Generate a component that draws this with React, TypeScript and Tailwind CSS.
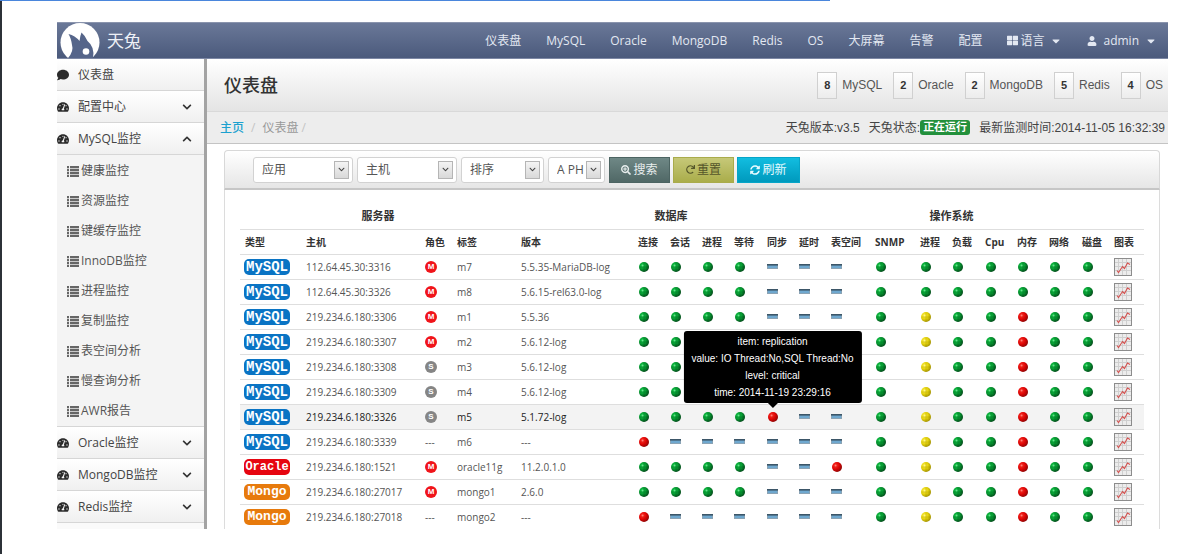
import { useState } from 'react';
import {
  FaCaretDown,
  FaChevronDown,
  FaChevronUp,
  FaComment,
  FaRedo,
  FaSearchPlus,
  FaSyncAlt,
  FaTachometerAlt,
  FaThLarge,
  FaUser,
} from 'react-icons/fa';

type Lamp = 'g' | 'r' | 'y' | '-';

interface Server {
  type: 'MySQL' | 'Oracle' | 'Mongo';
  host: string;
  role: 'M' | 'S' | '---';
  tag: string;
  version: string;
  db: string;
  os: string;
}

// db: 连接 会话 进程 等待 同步 延时 表空间, os: SNMP 进程 负载 Cpu 内存 网络 磁盘
const servers: Server[] = [
  { type: 'MySQL', host: '112.64.45.30:3316', role: 'M', tag: 'm7', version: '5.5.35-MariaDB-log', db: 'gggg---', os: 'ggggggg' },
  { type: 'MySQL', host: '112.64.45.30:3326', role: 'M', tag: 'm8', version: '5.6.15-rel63.0-log', db: 'gggg---', os: 'ggggggg' },
  { type: 'MySQL', host: '219.234.6.180:3306', role: 'M', tag: 'm1', version: '5.5.36', db: 'gggg---', os: 'gyggrgg' },
  { type: 'MySQL', host: '219.234.6.180:3307', role: 'M', tag: 'm2', version: '5.6.12-log', db: 'gggg---', os: 'gyggrgg' },
  { type: 'MySQL', host: '219.234.6.180:3308', role: 'S', tag: 'm3', version: '5.6.12-log', db: 'gggg---', os: 'gyggrgg' },
  { type: 'MySQL', host: '219.234.6.180:3309', role: 'S', tag: 'm4', version: '5.6.12-log', db: 'gggg---', os: 'gyggrgg' },
  { type: 'MySQL', host: '219.234.6.180:3326', role: 'S', tag: 'm5', version: '5.1.72-log', db: 'ggggr--', os: 'gyggrgg' },
  { type: 'MySQL', host: '219.234.6.180:3339', role: '---', tag: 'm6', version: '---', db: 'r------', os: 'gyggrgg' },
  { type: 'Oracle', host: '219.234.6.180:1521', role: 'M', tag: 'oracle11g', version: '11.2.0.1.0', db: 'gggg--r', os: 'gyggrgg' },
  { type: 'Mongo', host: '219.234.6.180:27017', role: 'M', tag: 'mongo1', version: '2.6.0', db: 'gggg---', os: 'gyggrgg' },
  { type: 'Mongo', host: '219.234.6.180:27018', role: '---', tag: 'mongo2', version: '---', db: 'r------', os: 'gyggrgg' },
];

const columns = [
  { name: '类型', width: 'w-[61px]' },
  { name: '主机', width: 'w-[119px]' },
  { name: '角色', width: 'w-[32px]' },
  { name: '标签', width: 'w-[64px]' },
  { name: '版本', width: 'w-[117px]' },
  { name: '连接', width: 'w-[32px]' },
  { name: '会话', width: 'w-[32px]' },
  { name: '进程', width: 'w-[32px]' },
  { name: '等待', width: 'w-[33px]' },
  { name: '同步', width: 'w-[32px]' },
  { name: '延时', width: 'w-[32px]' },
  { name: '表空间', width: 'w-[44px]' },
  { name: 'SNMP', width: 'w-[45px]' },
  { name: '进程', width: 'w-[32px]' },
  { name: '负载', width: 'w-[33px]' },
  { name: 'Cpu', width: 'w-[32px]' },
  { name: '内存', width: 'w-[32px]' },
  { name: '网络', width: 'w-[33px]' },
  { name: '磁盘', width: 'w-[32px]' },
  { name: '图表', width: 'w-[35px]' },
];

const navItems = ['仪表盘', 'MySQL', 'Oracle', 'MongoDB', 'Redis', 'OS', '大屏幕', '告警', '配置'];

const mysqlMenu = ['健康监控', '资源监控', '键缓存监控', 'InnoDB监控', '进程监控', '复制监控', '表空间分析', '慢查询分析', 'AWR报告'];

const counters = [
  { count: 8, name: 'MySQL' },
  { count: 2, name: 'Oracle' },
  { count: 2, name: 'MongoDB' },
  { count: 5, name: 'Redis' },
  { count: 4, name: 'OS' },
];

const filters = [
  { label: '应用', width: 'w-[100px]' },
  { label: '主机', width: 'w-[100px]' },
  { label: '排序', width: 'w-[83px]' },
  { label: 'A PH', width: 'w-[57px]' },
];

const badgeColors = {
  MySQL: 'bg-[#0a74c4] text-[14px]',
  Oracle: 'bg-[#e60510] text-[12px]',
  Mongo: 'bg-[#e77a0c] text-[13px]',
};

function Logo() {
  return (
    <svg viewBox="0 0 40 35" className="h-[35px] w-10" aria-hidden="true">
      <circle cx="20" cy="19.5" r="19.5" fill="#fff" />
      <path
        d="M8.5 11 Q15 12.5 19.5 18 Q20 13 21.5 9.5 Q25.5 13 27.5 18 Q35 24 33 35 L8 35 Q14 28 12 22 Q11 15 8.5 11 Z"
        fill="#55658a"
      />
      <circle cx="26" cy="28.5" r="3.3" fill="#fff" />
    </svg>
  );
}

function ListIcon() {
  return (
    <svg viewBox="0 0 12 11" className="h-[11px] w-3 text-[#666]" fill="currentColor" aria-hidden="true">
      {[0, 3, 6, 9].map(y => (
        <g key={y}>
          <rect x="0" y={y} width="2" height="2.3" />
          <rect x="3" y={y} width="9" height="2.3" />
        </g>
      ))}
    </svg>
  );
}

function StatusLamp({ value }: { value: Lamp }) {
  if (value === '-') {
    return (
      <svg viewBox="0 0 11 5" className="h-[5px] w-[11px]" aria-label="无数据">
        <rect x="0.5" y="0.5" width="10" height="4" fill="#6fa8cf" stroke="#8aa3b5" />
        <rect x="0" y="0" width="11" height="1.6" fill="#3c5668" />
      </svg>
    );
  }
  return (
    <svg viewBox="0 0 10 10" className="size-[10px]" aria-label="状态">
      <circle cx="5" cy="5" r="5" fill={`url(#lamp-${value})`} />
      <path d="M5 0.5V9.5M0.5 5H9.5" stroke={value === 'y' ? '#7d7400' : '#003010'} strokeWidth="0.6" opacity={value === 'r' ? 0.1 : 0.4} />
      <circle cx="3.6" cy="3.4" r="1" fill="#fff" opacity="0.35" />
    </svg>
  );
}

function LampGradients() {
  const lamps = [
    { id: 'lamp-g', light: '#14d24c', mid: '#069a32', dark: '#04491a' },
    { id: 'lamp-r', light: '#ff3a2e', mid: '#e60505', dark: '#8a0505' },
    { id: 'lamp-y', light: '#fff04a', mid: '#e6d40c', dark: '#a39205' },
  ];
  return (
    <svg className="absolute size-0" aria-hidden="true">
      <defs>
        {lamps.map(l => (
          <radialGradient key={l.id} id={l.id} cx="0.35" cy="0.35" r="0.7">
            <stop offset="0" stopColor={l.light} />
            <stop offset="0.5" stopColor={l.mid} />
            <stop offset="1" stopColor={l.dark} />
          </radialGradient>
        ))}
      </defs>
    </svg>
  );
}

function ChartIcon() {
  return (
    <svg viewBox="0 0 18 18" className="size-[18px]" aria-hidden="true">
      <rect x="0.5" y="0.5" width="17" height="17" fill="#ececec" stroke="#8c8c8c" />
      <path d="M4.5 1V17M8.5 1V17M12.5 1V17M1 4.5H17M1 8.5H17M1 12.5H17" stroke="#cfcfcf" />
      <path d="M3 12.5L4.5 14.5L8.5 8.5L10.5 10.5L13.5 5L16 6.5" fill="none" stroke="#d4514f" strokeWidth="1.1" />
    </svg>
  );
}

function Role({ role }: { role: Server['role'] }) {
  if (role === '---') return <>---</>;
  return (
    <span
      className={`flex size-3 items-center justify-center rounded-full font-['Liberation_Sans',sans-serif] text-[8px] leading-none font-bold text-white ${
        role === 'M' ? 'bg-[#f0141a]' : 'bg-[#858585]'
      }`}
    >
      {role}
    </span>
  );
}

function Tooltip() {
  return (
    <div
      role="tooltip"
      className="absolute bottom-full left-1/2 z-10 mb-[9px] -translate-x-1/2 rounded-[3px] bg-black px-2 py-[2px] text-center font-['Liberation_Sans',sans-serif] text-[10px] leading-[17px] font-normal whitespace-nowrap text-white"
    >
      <div>item: replication</div>
      <div>value: IO Thread:No,SQL Thread:No</div>
      <div>level: critical</div>
      <div>time: 2014-11-19 23:29:16</div>
      <div className="absolute top-full left-1/2 -translate-x-1/2 border-x-[5px] border-t-[5px] border-x-transparent border-t-black" />
    </div>
  );
}

function MenuButton({ label, open, onClick }: { label: string; open?: boolean; onClick?: () => void }) {
  return (
    <button
      type="button"
      onClick={onClick}
      aria-expanded={!!open}
      className="flex h-8 w-full items-center border-b border-[#d6d6d6] bg-linear-to-b from-white to-[#f0f0f0] pr-3 text-left text-[#444]"
    >
      <FaTachometerAlt size={12} className="text-[#2b2b2b]" />
      <span className="ml-[9px] flex-1">{label}</span>
      {open ? <FaChevronUp size={10} className="text-[#333]" /> : <FaChevronDown size={10} className="text-[#333]" />}
    </button>
  );
}

function Sidebar() {
  const [open, setOpen] = useState(true);

  return (
    <aside className="w-[150px] shrink-0 border-r-[3px] border-[#a3a3a3] bg-[#fafafa]">
      <a href="#dashboard" className="flex h-8 items-center border-b border-[#d6d6d6] bg-linear-to-b from-white to-[#f0f0f0] text-[#444]">
        <FaComment size={12} className="text-[#2b2b2b]" />
        <span className="ml-[9px]">仪表盘</span>
      </a>
      <MenuButton label="配置中心" />
      <MenuButton label="MySQL监控" open={open} onClick={() => setOpen(!open)} />
      {open && (
        <ul className="border-b border-[#d6d6d6] bg-[#f4f4f4] pt-px">
          {mysqlMenu.map(item => (
            <li key={item}>
              <a href={`#${item}`} className="flex h-[30px] items-center gap-[2px] pl-[10px] text-[#555]">
                <ListIcon />
                {item}
              </a>
            </li>
          ))}
        </ul>
      )}
      <MenuButton label="Oracle监控" />
      <MenuButton label="MongoDB监控" />
      <MenuButton label="Redis监控" />
    </aside>
  );
}

function FilterBar() {
  return (
    <form
      onSubmit={e => e.preventDefault()}
      className="flex h-10 items-center gap-1 rounded-t-[4px] border border-b-2 border-[#d8d8d8] border-b-[#c6c6c6] bg-linear-to-b from-white to-[#e6e6e6] pl-7"
    >
      {filters.map(f => (
        <div key={f.label} className={`relative ${f.width}`}>
          <select
            aria-label={f.label}
            className="block h-[26px] w-full appearance-none rounded-[3px] border border-[#d2d2d2] bg-white pl-2 text-[12px] text-[#555]"
          >
            <option>{f.label}</option>
          </select>
          <span className="pointer-events-none absolute top-1 right-1 flex h-[18px] w-[15px] items-center justify-center border border-[#b5b5b5] bg-linear-to-b from-[#f4f4f4] to-[#d9d9d9]">
            <FaChevronDown size={7} className="text-[#444]" />
          </span>
        </div>
      ))}
      <div className="flex gap-[3px]">
        <button type="submit" className="flex h-[26px] w-[61px] items-center justify-center gap-[2px] border border-[#4c6462] bg-linear-to-b from-[#6f8886] to-[#506866] text-[#e8eeee]">
          <FaSearchPlus size={10} />
          搜索
        </button>
        <button type="reset" className="flex h-[26px] w-[61px] items-center justify-center gap-[2px] border border-[#a9ab4b] bg-linear-to-b from-[#c6c878] to-[#aaad4a] text-[#55562a]">
          <FaRedo size={9} />
          重置
        </button>
        <button type="button" className="flex h-[26px] w-[63px] items-center justify-center gap-[2px] border border-[#06a5c8] bg-linear-to-b from-[#12bde0] to-[#0099bd] text-[#e6fbff]">
          <FaSyncAlt size={10} />
          刷新
        </button>
      </div>
    </form>
  );
}

function ServerTable() {
  return (
    <table className="w-full table-fixed border-collapse text-[10px] text-[#555]">
      <colgroup>
        {columns.map((c, i) => (
          <col key={i} className={c.width} />
        ))}
      </colgroup>
      <thead className="text-[#333]">
        <tr className="h-[25px] text-[11px]">
          <th colSpan={4}>服务器</th>
          <th colSpan={7}>数据库</th>
          <th colSpan={7}>操作系统</th>
          <th colSpan={2} />
        </tr>
        <tr className="h-[25px] border-t border-[#dedede]">
          {columns.map((c, i) => (
            <th key={i} className="p-0 pl-[5px] text-left whitespace-nowrap">
              {c.name}
            </th>
          ))}
        </tr>
      </thead>
      <tbody>
        {servers.map(s => {
          const active = s.tag === 'm5';
          return (
            <tr
              key={s.tag}
              className={`h-[25px] border-t border-[#dedede] whitespace-nowrap ${active ? 'bg-[#f3f3f3] text-[#222]' : ''}`}
            >
              <td className="p-0 pl-1">
                <span
                  className={`flex h-4 w-[46px] items-center justify-center rounded-[5px] font-['Liberation_Mono',monospace] leading-none font-bold text-white ${badgeColors[s.type]}`}
                >
                  {s.type}
                </span>
              </td>
              <td className="p-0 pl-[5px]">{s.host}</td>
              <td className="p-0 pl-[5px]">
                <Role role={s.role} />
              </td>
              <td className="p-0 pl-[5px]">{s.tag}</td>
              <td className="p-0 pl-[5px]">{s.version}</td>
              {(s.db + s.os).split('').map((v, i) => (
                <td key={i} className="p-0 pl-[5px]">
                  <div className="relative flex w-[11px] justify-center">
                    <StatusLamp value={v as Lamp} />
                    {active && v === 'r' && i === 4 && <Tooltip />}
                  </div>
                </td>
              ))}
              <td className="p-0 pl-[5px]">
                <a href={`#chart-${s.tag}`} aria-label="图表" className="block w-[18px]">
                  <ChartIcon />
                </a>
              </td>
            </tr>
          );
        })}
      </tbody>
    </table>
  );
}

export default function App() {
  return (
    <div className="flex min-h-screen flex-col bg-white font-['Open_Sans','Noto_Sans_CJK_SC',sans-serif] text-[12px] leading-4">
      <LampGradients />
      <div className="h-px w-[69.6%] bg-[#4a86dc]" />
      <div className="flex-1 border-l-2 border-[#2c3138] pt-[21px] pr-[25px] pl-[55px]">
        <header className="flex h-[37px] items-center border-y border-t-[#8a94ad] border-b-[#7d88a5] bg-linear-to-b from-[#6a7898] to-[#4b5a7c] pl-[3px] text-[#e3e8f2]">
          <Logo />
          <span className="ml-[7px] text-[17px] text-[#eef1f7]">天兔</span>
          <nav className="ml-auto flex items-center gap-[25px] pr-[11px]">
            {navItems.map(item => (
              <a key={item} href={`#${item}`}>
                {item}
              </a>
            ))}
            <button type="button" className="flex items-center gap-[2px]">
              <FaThLarge size={11} />
              语言
              <FaCaretDown size={12} className="ml-1" />
            </button>
            <button type="button" className="flex items-center gap-[6px]">
              <FaUser size={10} />
              admin
              <FaCaretDown size={12} />
            </button>
          </nav>
        </header>

        <div className="flex">
          <Sidebar />
          <main className="min-w-0 flex-1">
            <div className="flex h-[53px] items-center justify-between border-b border-[#d9d9d9] bg-linear-to-b from-white to-[#e4e4e4] pr-[5px] pl-[17px]">
              <h1 className="text-[18px] font-medium text-[#333]">仪表盘</h1>
              <div className="flex gap-[11px] font-['Liberation_Sans',sans-serif] text-[#555]">
                {counters.map(c => (
                  <div key={c.name} className="flex items-center gap-[5px]">
                    <span className="flex h-[27px] w-5 items-center justify-center border border-[#d0d0d0] bg-linear-to-b from-white to-[#ececec] text-[11px] font-bold text-[#333]">
                      {c.count}
                    </span>
                    {c.name}
                  </div>
                ))}
              </div>
            </div>

            <div className="flex h-8 items-center justify-between border-b border-[#c4c4c4] bg-[#ededed] pr-[3px] pl-[13px]">
              <div className="flex gap-[7px] text-[#999]">
                <a href="#home" className="font-medium text-[#1ba1cf]">主页</a>
                <span className="text-[#c4c4c4]">/</span>
                <span>仪表盘</span>
                <span className="-ml-1 text-[#c4c4c4]">/</span>
              </div>
              <div className="flex items-center gap-[9px] font-['Liberation_Sans','Noto_Sans_CJK_SC',sans-serif] text-[#444]">
                <span>天兔版本:v3.5</span>
                <span className="flex items-center">
                  天兔状态:
                  <span className="rounded-[3px] bg-[#23903c] px-[3px] text-[11px] leading-[15px] font-bold text-white">正在运行</span>
                </span>
                <span>最新监测时间:2014-11-05 16:32:39</span>
              </div>
            </div>

            <div className="pt-[6px] pr-2 pl-[17px]">
              <FilterBar />
              <div className="border-x border-[#dcdcdc] px-[15px] pt-[14px]">
                <ServerTable />
              </div>
            </div>
          </main>
        </div>
      </div>
    </div>
  );
}
